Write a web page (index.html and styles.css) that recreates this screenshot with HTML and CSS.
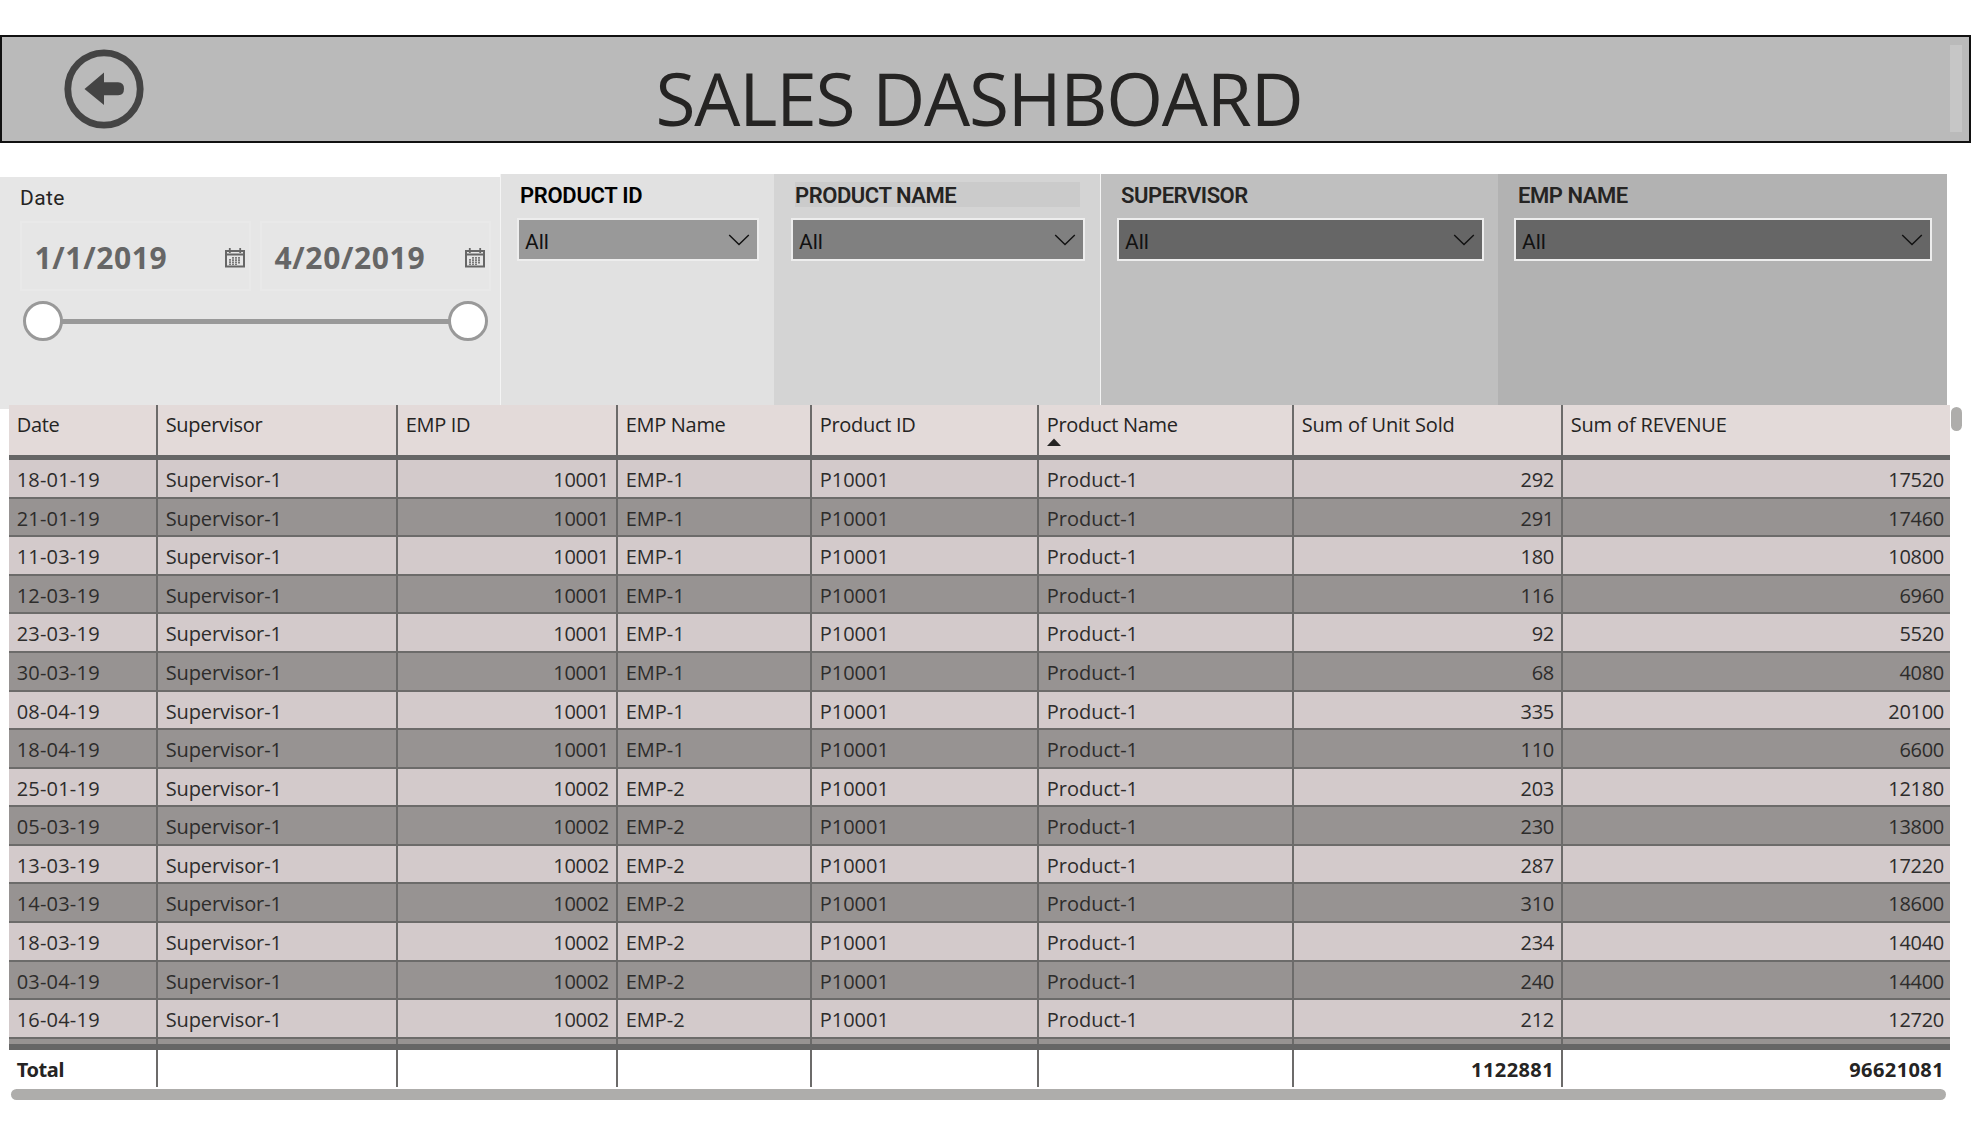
FILE: index.html
```html
<!DOCTYPE html>
<html lang="en">
<head>
<meta charset="utf-8">
<title>Sales Dashboard</title>
<link rel="stylesheet" href="styles.css">
</head>
<body>
<header class="banner">
  <svg class="back" width="80" height="80" viewBox="0 0 80 80"><circle cx="40" cy="40" r="36.2" fill="none" stroke="#444" stroke-width="6.8"/><path d="M20.5 40 40 23.6V33.3H54Q60 33.3 60 39.8T54 46.2H40V56Z" fill="#444"/></svg>
  <h1 class="title">SALES DASHBOARD</h1>
  <div class="banner-strip"></div>
</header>

<section class="filters">
  <div class="date-panel">
    <div class="date-label">Date</div>
    <div class="date-inputs">
      <div class="date-box"><span>1/1/2019</span>
        <svg class="cal" width="20" height="20" viewBox="0 0 20 20"><path d="M1 3H19V18.6H1ZM1 6.6H19" fill="none" stroke="#666" stroke-width="2"/><path d="M4.8 0V5M15.2 0V5" stroke="#666" stroke-width="1.8"/><path d="M5 11V17M8 9V17M11 9V17M14 9V16" stroke="#666" stroke-width="1.7" stroke-dasharray="1.8 .5"/></svg>
      </div>
      <div class="date-box"><span>4/20/2019</span>
        <svg class="cal" width="20" height="20" viewBox="0 0 20 20"><path d="M1 3H19V18.6H1ZM1 6.6H19" fill="none" stroke="#666" stroke-width="2"/><path d="M4.8 0V5M15.2 0V5" stroke="#666" stroke-width="1.8"/><path d="M5 11V17M8 9V17M11 9V17M14 9V16" stroke="#666" stroke-width="1.7" stroke-dasharray="1.8 .5"/></svg>
      </div>
    </div>
    <div class="slider"><i class="knob"></i><i class="track"></i><i class="knob"></i></div>
  </div>
  <div class="panel p-id"><h2>PRODUCT ID</h2><div class="select"><span>All</span><svg class="chev" width="22" height="12" viewBox="0 0 22 12"><path d="M1.2 1 11 10.6 20.8 1"/></svg></div></div>
  <div class="panel p-name"><h2>PRODUCT NAME</h2><div class="select"><span>All</span><svg class="chev" width="22" height="12" viewBox="0 0 22 12"><path d="M1.2 1 11 10.6 20.8 1"/></svg></div></div>
  <div class="panel p-sup"><h2>SUPERVISOR</h2><div class="select"><span>All</span><svg class="chev" width="22" height="12" viewBox="0 0 22 12"><path d="M1.2 1 11 10.6 20.8 1"/></svg></div></div>
  <div class="panel p-emp"><h2>EMP NAME</h2><div class="select"><span>All</span><svg class="chev" width="22" height="12" viewBox="0 0 22 12"><path d="M1.2 1 11 10.6 20.8 1"/></svg></div></div>
</section>

<section class="grid-area">
  <div class="table">
    <div class="row head"><div>Date</div><div>Supervisor</div><div>EMP ID</div><div>EMP Name</div><div>Product ID</div><div class="sorted">Product Name<svg class="sort" width="14" height="8" viewBox="0 0 14 8"><path d="M0 8 7 .5 14 8Z" fill="#252423"/></svg></div><div class="sum">Sum of Unit Sold</div><div class="sum">Sum of REVENUE</div></div>
    <div class="body">
      <div class="row"><div>18-01-19</div><div>Supervisor-1</div><div>10001</div><div>EMP-1</div><div>P10001</div><div>Product-1</div><div>292</div><div>17520</div></div>
      <div class="row"><div>21-01-19</div><div>Supervisor-1</div><div>10001</div><div>EMP-1</div><div>P10001</div><div>Product-1</div><div>291</div><div>17460</div></div>
      <div class="row"><div>11-03-19</div><div>Supervisor-1</div><div>10001</div><div>EMP-1</div><div>P10001</div><div>Product-1</div><div>180</div><div>10800</div></div>
      <div class="row"><div>12-03-19</div><div>Supervisor-1</div><div>10001</div><div>EMP-1</div><div>P10001</div><div>Product-1</div><div>116</div><div>6960</div></div>
      <div class="row"><div>23-03-19</div><div>Supervisor-1</div><div>10001</div><div>EMP-1</div><div>P10001</div><div>Product-1</div><div>92</div><div>5520</div></div>
      <div class="row"><div>30-03-19</div><div>Supervisor-1</div><div>10001</div><div>EMP-1</div><div>P10001</div><div>Product-1</div><div>68</div><div>4080</div></div>
      <div class="row"><div>08-04-19</div><div>Supervisor-1</div><div>10001</div><div>EMP-1</div><div>P10001</div><div>Product-1</div><div>335</div><div>20100</div></div>
      <div class="row"><div>18-04-19</div><div>Supervisor-1</div><div>10001</div><div>EMP-1</div><div>P10001</div><div>Product-1</div><div>110</div><div>6600</div></div>
      <div class="row"><div>25-01-19</div><div>Supervisor-1</div><div>10002</div><div>EMP-2</div><div>P10001</div><div>Product-1</div><div>203</div><div>12180</div></div>
      <div class="row"><div>05-03-19</div><div>Supervisor-1</div><div>10002</div><div>EMP-2</div><div>P10001</div><div>Product-1</div><div>230</div><div>13800</div></div>
      <div class="row"><div>13-03-19</div><div>Supervisor-1</div><div>10002</div><div>EMP-2</div><div>P10001</div><div>Product-1</div><div>287</div><div>17220</div></div>
      <div class="row"><div>14-03-19</div><div>Supervisor-1</div><div>10002</div><div>EMP-2</div><div>P10001</div><div>Product-1</div><div>310</div><div>18600</div></div>
      <div class="row"><div>18-03-19</div><div>Supervisor-1</div><div>10002</div><div>EMP-2</div><div>P10001</div><div>Product-1</div><div>234</div><div>14040</div></div>
      <div class="row"><div>03-04-19</div><div>Supervisor-1</div><div>10002</div><div>EMP-2</div><div>P10001</div><div>Product-1</div><div>240</div><div>14400</div></div>
      <div class="row"><div>16-04-19</div><div>Supervisor-1</div><div>10002</div><div>EMP-2</div><div>P10001</div><div>Product-1</div><div>212</div><div>12720</div></div>
      <div class="row"><div></div><div></div><div></div><div></div><div></div><div></div><div></div><div></div></div>
    </div>
    <div class="row total"><div>Total</div><div></div><div></div><div></div><div></div><div></div><div>1122881</div><div>96621081</div></div>
    <div class="hscroll"></div>
  </div>
  <div class="vscroll"></div>
</section>
</body>
</html>
```
FILE: styles.css
```css
* { box-sizing: border-box; }

body {
  margin: 0;
  padding-top: 35px;
  height: 1125px;
  overflow: hidden;
  background: #fff;
  color: #252423;
  font-family: "Open Sans", "Noto Sans", sans-serif;
}

/* Banner */
.banner {
  display: flex;
  align-items: flex-start;
  height: 108px;
  border: 2px solid #111;
  background: #bababa;
}
.back { margin: 12px 0 0 62px; flex: none; }
.title {
  margin: 11px 0 0 511.5px;
  font-size: 73px;
  font-weight: 400;
  line-height: 100px;
  letter-spacing: -1.2px;
  white-space: nowrap;
}
.banner-strip {
  width: 12px;
  height: 87px;
  margin: 8px 7.5px 0 auto;
  background: #c6c6c6;
}

/* Filters */
.filters {
  display: grid;
  grid-template-columns: 500px 274px 326px 398px 449px;
  align-items: start;
  height: 231px;
  margin-top: 31px;
}
.date-panel {
  height: 232px;
  margin-top: 3px;
  padding: 8px 8px 0 20px;
  background: #e6e6e6;
}
.date-label {
  height: 36px;
  font: 400 21px/26px Roboto, sans-serif;
  letter-spacing: .4px;
}
.date-inputs { display: flex; gap: 9px; }
.date-box {
  display: flex;
  justify-content: space-between;
  align-items: center;
  width: 231px;
  height: 70px;
  padding: 3px 4.5px 0 12.5px;
  border: 2px solid #e9e9e9;
  color: #666;
  font-size: 30px;
  font-weight: 700;
  letter-spacing: .65px;
}
.cal { margin-top: 1px; }
.slider {
  display: flex;
  align-items: center;
  margin: 10px 4.5px 0 3px;
}
.knob {
  flex: none;
  width: 40px;
  height: 40px;
  border: 3px solid #999;
  border-radius: 50%;
  background: #fff;
}
.track { flex: 1; height: 5px; margin: 0 -1px; background: #999; }

.panel {
  height: 231px;
  padding: 8px 15px 0 16px;
}
.p-id { background: #e1e1e1; border-left: 1px solid #f4f4f4; }
.p-name { background: #d4d4d4; padding-right: 15px; padding-left: 17px; }
.p-sup { background: #bfbfbf; border-left: 1px solid #f4f4f4; padding: 8px 14px 0 16px; }
.p-emp { background: #b2b2b2; padding-left: 16px; }
.panel h2 {
  height: 25px;
  margin: 0 5px 11px 4px;
  font: 600 22px/27px Roboto, sans-serif;
  letter-spacing: -.45px;
  white-space: nowrap;
}
.p-id h2 { color: #000; margin-left: 3px; letter-spacing: -.3px; }
.p-name h2 { background: #cbcbcb; }
.select {
  display: flex;
  justify-content: space-between;
  align-items: center;
  height: 43px;
  padding: 5px 7px 0 6px;
  border: 2px solid #ededed;
  color: #111;
  font: 400 21px/26px Roboto, sans-serif;
}
.p-id .select { background: #999; }
.p-name .select { background: #808080; }
.p-sup .select, .p-emp .select { background: #666; }
.chev { fill: none; stroke: #111; stroke-width: 1.4; margin-top: -4px; }

/* Data table */
.grid-area { display: flex; gap: 1px; padding-left: 9px; }
.table { width: 1941px; }
.row {
  display: grid;
  grid-template-columns: 149px 240px 220px 194px 227px 255px 269px 387px;
  height: 38.57px;
  font-size: 20px;
  line-height: 27px;
}
.row > div {
  padding: 6px 7px 0 7.7px;
  border-right: 2px solid #6c6b6a;
  border-bottom: 2px solid #6c6b6a;
  white-space: nowrap;
}
.row > div:last-child { border-right: 0; padding-right: 6px; }
.row > div:nth-child(3),
.row > div:nth-child(7),
.row > div:nth-child(8) { text-align: right; letter-spacing: -.3px; }
.row > div:nth-child(1) { letter-spacing: .2px; }
.row > div:nth-child(2) { letter-spacing: -.12px; }
.body {
  height: 583.4px;
  overflow: hidden;
  color: #2d2c2b;
}
.body .row { background: #d3cacb; }
.body .row:nth-child(even) { background: #979392; }
.head {
  height: 55.2px;
  background: #e3dad9;
  border-bottom: 5.6px solid #666;
}
.head.row > div {
  padding-top: 6px;
  border-bottom: 0;
  text-align: left;
  letter-spacing: -.3px;
}
.head.row > .sum { letter-spacing: -.15px; }
.sort { display: block; margin-top: 0; }
.total {
  height: 43.4px;
  border-top: 6px solid #666;
  font-family: "Noto Sans", sans-serif;
  font-weight: 700;
}
.total.row > div { border-bottom: 0; padding-top: 6px; letter-spacing: .4px; }
.total.row > div:first-child { letter-spacing: -.4px; }
.hscroll {
  height: 11px;
  margin: 2px 4px 0 2px;
  border-radius: 6px;
  background: #aeadab;
}
.vscroll {
  width: 11px;
  height: 24px;
  margin-top: 2px;
  border-radius: 6px;
  background: #aeadab;
}
```
